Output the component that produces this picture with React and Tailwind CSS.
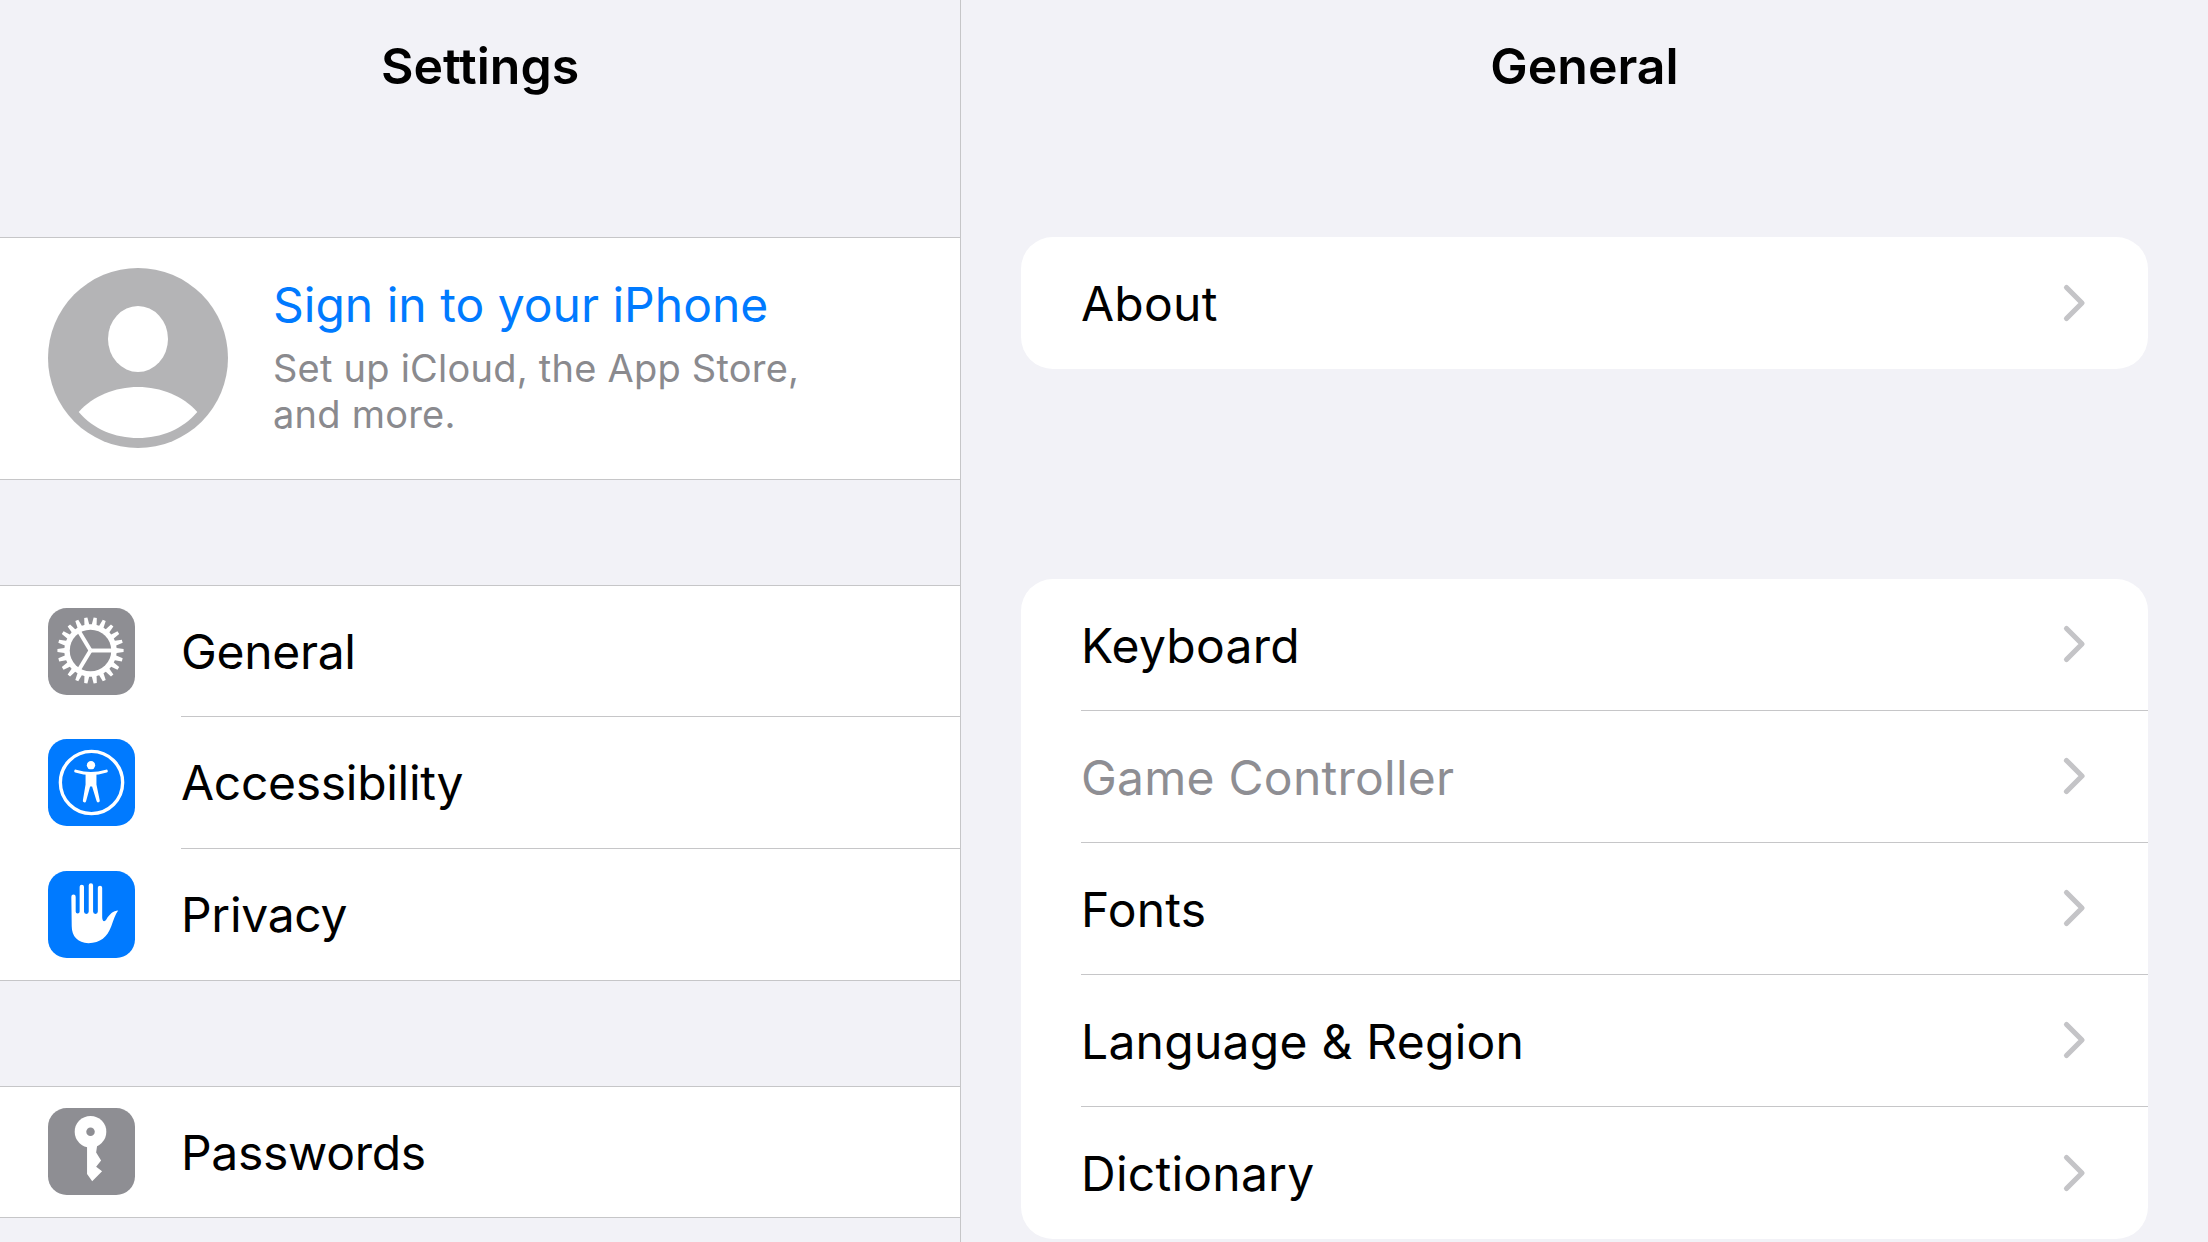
const FONT = "font-['Inter','Liberation_Sans',sans-serif]";

function Gear() {
  const teeth = 22;
  const pts = [];
  for (let i = 0; i < teeth; i++) {
    const a = (i / teeth) * Math.PI * 2;
    const s = (Math.PI * 2) / teeth;
    const p = (r, t) => `${(43 + r * Math.cos(t)).toFixed(2)} ${(43 + r * Math.sin(t)).toFixed(2)}`;
    pts.push(p(26.5, a - s * 0.32), p(33.5, a - s * 0.17), p(33.5, a + s * 0.17), p(26.5, a + s * 0.32));
  }
  return (
    <svg viewBox="0 0 88 88" className="w-[87px] h-[87px] block">
      <rect width="88" height="88" rx="19" fill="#8e8e93" />
      <path d={`M${pts.join("L")}Z`} fill="#fff" />
      <circle cx="43" cy="43" r="21" fill="#8e8e93" />
      <g stroke="#fff" strokeWidth="4" strokeLinecap="butt">
        <line x1="43" y1="43" x2="66" y2="43" />
        <line x1="43" y1="43" x2="31" y2="23" />
        <line x1="43" y1="43" x2="31" y2="63" />
      </g>
    </svg>
  );
}

function Access() {
  return (
    <svg viewBox="0 0 88 88" className="w-[87px] h-[87px] block">
      <rect width="88" height="88" rx="19" fill="#007aff" />
      <circle cx="44" cy="44" r="31.5" fill="none" stroke="#fff" strokeWidth="3.4" />
      <circle cx="43.5" cy="26.5" r="4.2" fill="#fff" />
      <path
        d="M28 32.5 C33 34 38 35 43.5 35 C49 35 54 34 59 32.5"
        fill="none"
        stroke="#fff"
        strokeWidth="3"
        strokeLinecap="round"
      />
      <path
        d="M38 34 H49 V46 L52.3 62 A1.6 1.6 0 0 1 49.2 63 L44.6 48 H42.6 L38.5 63 A1.6 1.6 0 0 1 35.3 62 L38 46 Z"
        fill="#fff"
      />
    </svg>
  );
}

function Hand() {
  return (
    <svg viewBox="0 0 88 88" className="w-[87px] h-[87px] block">
      <rect width="88" height="88" rx="19" fill="#007aff" />
      <path
        d="M23.6 26 A2.2 2.2 0 0 1 28 26 V41 A2 2 0 0 0 32 41 V16 A2.2 2.2 0 0 1 36.4 16 V41 A2.4 2.4 0 0 0 41.2 41 V14.5 A2.2 2.2 0 0 1 45.6 14.5 V41 A2.4 2.4 0 0 0 50.4 41 V17 A2.2 2.2 0 0 1 54.8 17 V47 C55 51 57 52 59 49 C62 44 66 40 71 40 C68 44 66 50 64 56 C60 67 53 73 41 73 C30 73 24 66 24 56 Z"
        fill="#fff"
      />
    </svg>
  );
}

function Key() {
  return (
    <svg viewBox="0 0 88 88" className="w-[87px] h-[87px] block">
      <rect width="88" height="88" rx="19" fill="#8e8e93" />
      <path
        d="M39.5 36 L39.5 66.7 L44.7 74 L54.7 64 L48.7 59.3 L53.7 53 L48.7 45 L50 36 Z"
        fill="#fff"
      />
      <circle cx="43" cy="24" r="16" fill="#fff" />
      <circle cx="43" cy="24" r="4.3" fill="#8e8e93" />
    </svg>
  );
}

function Avatar() {
  return (
    <svg viewBox="0 0 180 180" className="w-[180px] h-[180px] block shrink-0 -mt-[2px]">
      <circle cx="90" cy="90" r="90" fill="#b4b4b6" />
      <ellipse cx="90" cy="71" rx="30" ry="33" fill="#fff" />
      <path d="M30.7 144 C45 128 67 119 90 119 C113 119 135 128 149.3 144 C135 161 113 170 90 170 C67 170 45 161 30.7 144 Z" fill="#fff" />
    </svg>
  );
}

function Chevron() {
  return (
    <svg viewBox="0 0 24 40" className="w-[24px] h-[40px] block shrink-0 -mt-[3px]">
      <path d="M4.5 4.5 L20 20 L4.5 35.5" fill="none" stroke="#c4c4c7" strokeWidth="5.2" strokeLinecap="round" strokeLinejoin="round" />
    </svg>
  );
}

function Title({ children }) {
  return (
    <div className="h-[132px] mb-[105px] flex items-center justify-center text-[50px] font-semibold text-black">
      {children}
    </div>
  );
}

function SideRow({ icon, label, last, height }) {
  return (
    <div className={`flex items-center pl-[48px] ${height}`}>
      <div className="w-[87px] shrink-0">{icon}</div>
      <div className={`ml-[46px] flex-1 h-full flex items-center pt-[2px] text-[48px] tracking-[-0.3px] text-black ${last ? "" : "border-b border-[#c6c6c8]"}`}>
        {label}
      </div>
    </div>
  );
}

function DetailRow({ label, muted, last }) {
  return (
    <div className="h-[132px] pl-[60px] flex">
      <div className={`flex-1 flex items-center justify-between pt-[2px] pr-[62px] text-[48px] tracking-[0.25px] ${muted ? "text-[#8e8e93]" : "text-black"} ${last ? "" : "border-b border-[#c6c6c8]"}`}>
        <span>{label}</span>
        <Chevron />
      </div>
    </div>
  );
}

export default function App() {
  return (
    <div className={`w-[2208px] h-[1242px] overflow-hidden flex bg-[#f2f2f7] ${FONT}`}>
      <div className="w-[961px] shrink-0 h-full border-r border-[#c6c6c8]">
        <Title>Settings</Title>
        <div className="h-[243px] bg-white border-y border-[#c6c6c8] flex items-center pl-[48px]">
          <Avatar />
          <div className="ml-[45px] -mt-[6px]">
            <div className="text-[48px] leading-[60px] mb-[10px] text-[#007aff]">Sign in to your iPhone</div>
            <div className="text-[38px] leading-[46px] text-[#8a8a8e] w-[560px] tracking-[0.23px]">
              Set up iCloud, the App Store, and more.
            </div>
          </div>
        </div>
        <div className="mt-[105px] bg-white border-y border-[#c6c6c8]">
          <SideRow height="h-[131.33px]" icon={<Gear />} label="General" />
          <SideRow height="h-[131.33px]" icon={<Access />} label="Accessibility" />
          <SideRow height="h-[131.33px]" icon={<Hand />} label="Privacy" last />
        </div>
        <div className="mt-[105px] bg-white border-y border-[#c6c6c8]">
          <SideRow height="h-[130px]" icon={<Key />} label="Passwords" last />
        </div>
      </div>
      <div className="flex-1 h-full">
        <Title>General</Title>
        <div className="mx-[60px] bg-white rounded-[32px]">
          <DetailRow label="About" last />
        </div>
        <div className="mx-[60px] mt-[210px] bg-white rounded-[32px] overflow-hidden">
          <DetailRow label="Keyboard" />
          <DetailRow label="Game Controller" muted />
          <DetailRow label="Fonts" />
          <DetailRow label="Language & Region" />
          <DetailRow label="Dictionary" last />
        </div>
      </div>
    </div>
  );
}
